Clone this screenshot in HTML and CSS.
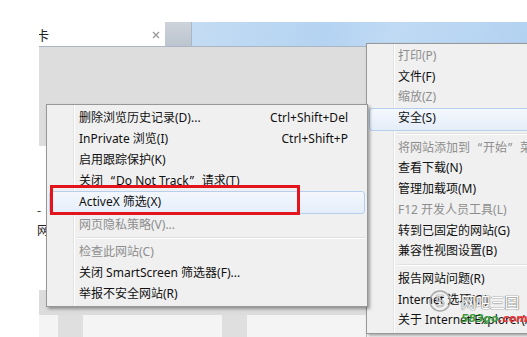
FILE: index.html
```html
<!DOCTYPE html>
<html lang="zh-CN">
<head>
<meta charset="utf-8">
<title>IE 安全菜单</title>
<link rel="stylesheet" href="styles.css">
</head>
<body>
<div class="screen">
  <div class="topgap"></div>
  <div class="tabbar">
    <div class="lead"></div>
    <div class="tab">
      <span class="tabtext">卡</span>
      <svg class="close" width="8" height="8" viewBox="0 0 8 8"><path d="M1 1L7 7M7 1L1 7" stroke="#9a9a9a" stroke-width="1.4"/></svg>
    </div>
    <div class="tabstub"></div>
    <div class="chrome"></div>
  </div>
  <div class="body">
    <div class="gutter"></div>
    <div class="content">
      <div class="band"></div>
      <div class="pagearea">
        <div class="pagetext">-<br>网页</div>
      </div>
      <div class="strip"></div>
      <div class="tiles">
        <div class="tile w19"></div>
        <div class="tgap"></div>
        <div class="tile w139"></div>
        <div class="tgap"></div>
        <div class="tile w119"></div>
        <div class="tend"></div>
      </div>
    </div>
  </div>

  <div class="menu main">
    <div class="item off"><span>打印(P)</span></div>
    <div class="item"><span>文件(F)</span></div>
    <div class="item off"><span>缩放(Z)</span></div>
    <div class="item hot"><span>安全(S)</span></div>
    <div class="sep"></div>
    <div class="item off"><span>将网站添加到<span class="q ql">“</span>开始<span class="q qr">”</span>菜单</span></div>
    <div class="item"><span>查看下载(N)</span></div>
    <div class="item"><span>管理加载项(M)</span></div>
    <div class="item off"><span>F12 开发人员工具(L)</span></div>
    <div class="item"><span>转到已固定的网站(G)</span></div>
    <div class="item"><span>兼容性视图设置(B)</span></div>
    <div class="sep"></div>
    <div class="item"><span>报告网站问题(R)</span></div>
    <div class="item"><span>Internet 选项(O)</span></div>
    <div class="item"><span>关于 Internet Explorer(A)</span></div>
  </div>

  <div class="menu sub">
    <div class="item"><span>删除浏览历史记录(D)...</span><span>Ctrl+Shift+Del</span></div>
    <div class="item"><span>InPrivate 浏览(I)</span><span>Ctrl+Shift+P</span></div>
    <div class="item"><span>启用跟踪保护(K)</span></div>
    <div class="item"><span>关闭<span class="q ql">“</span>Do Not Track<span class="q qr">”</span>请求(T)</span></div>
    <div class="item hot"><span>ActiveX 筛选(X)</span></div>
    <div class="item off"><span>网页隐私策略(V)...</span></div>
    <div class="sep"></div>
    <div class="item off"><span>检查此网站(C)</span></div>
    <div class="item"><span>关闭 SmartScreen 筛选器(F)...</span></div>
    <div class="item"><span>举报不安全网站(R)</span></div>
  </div>

  <div class="redbox"></div>

  <div class="watermark">
    <svg class="wlogo" width="22" height="26" viewBox="0 0 22 26">
      <circle cx="11" cy="13" r="10" fill="none" stroke="rgba(150,150,150,0.8)" stroke-width="1.5"/>
      <text x="11" y="19" text-anchor="middle" font-size="17" font-family="Liberation Sans, sans-serif" fill="rgba(255,255,255,0.9)" stroke="rgba(140,140,140,0.8)" stroke-width="0.7">5</text>
    </svg>
    <div class="wtext">
      <div class="wname">网吧三国</div>
      <div class="wurl"><span class="g">583go</span><span class="r">.com</span></div>
    </div>
  </div>
</div>
</body>
</html>
```

FILE: styles.css
```css
body {
  margin: 0;
  width: 527px;
  height: 337px;
  overflow: hidden;
  background: #fff;
  font-family: "Noto Sans", "Noto Sans CJK SC", sans-serif;
  font-size: 12px;
  color: #111;
}

.screen {
  position: relative;
  width: 527px;
  height: 337px;
  overflow: hidden;
  display: flex;
  flex-direction: column;
}

.topgap { height: 22px; flex: none; }

.tabbar { height: 24px; flex: none; display: flex; }
.lead { width: 39px; }
.tab {
  width: 126px;
  background: #fff;
  display: flex;
  align-items: center;
  justify-content: space-between;
  padding-right: 5px;
  box-sizing: border-box;
  overflow: hidden;
}
.tabtext {
  font-family: "Noto Sans CJK SC", sans-serif;
  font-size: 13px;
  margin-left: -3px;
  color: #222;
}
.close { display: block; margin-top: 1px; }
.tabstub {
  width: 26px;
  background: linear-gradient(#cdd3db, #bcc5cf);
  border-right: 1px solid #a8b8c8;
}
.chrome {
  flex: 1;
  background: linear-gradient(100deg, #c4dcf3 0%, #b4d3f2 40%, #c0daf4 60%, #b3d2f1 100%);
}

.body { flex: 1; display: flex; }
.gutter { width: 39px; flex: none; }
.content { flex: 1; display: flex; flex-direction: column; }
.band {
  height: 99px;
  flex: none;
  background: #dddddd;
  border-top: 1px solid #a9b5c2;
}
.pagearea { height: 144px; flex: none; background: #fff; }
.pagetext {
  padding-top: 54px;
  margin-left: -2px;
  line-height: 20px;
  font-family: "Noto Sans CJK SC", sans-serif;
  color: #222;
}
.strip { height: 25px; flex: none; background: #dcdcdc; }
.tiles { flex: 1; display: flex; }
.tile { background: #f4f4f4; }
.w19 { width: 19px; }
.w139 { width: 139px; }
.w119 { width: 119px; }
.tgap { width: 25px; background: #dfdfdf; }
.tend { flex: 1; border-left: 1px solid #b9b9b9; background: #fff; }

/* menus */
.menu {
  position: absolute;
  box-sizing: border-box;
  border: 1px solid #979797;
  padding: 2px;
  background:
    linear-gradient(to right, transparent 26px, #e2e3e3 26px, #e2e3e3 27px, #ffffff 27px, #ffffff 28px, transparent 28px),
    #f0f0f0;
  box-shadow: 2px 2px 3px rgba(0, 0, 0, 0.35);
}
.main { left: 366px; top: 43px; width: 210px; }
.sub { left: 46px; top: 104px; width: 322px; z-index: 2; }

.item {
  display: flex;
  justify-content: space-between;
  padding: 0 17px 0 30px;
  white-space: nowrap;
  color: #111;
}
.main .item { height: 20.7px; line-height: 20.7px; padding-left: 29px; }
.sub .item { height: 21px; line-height: 21px; }
.item.off { color: #8e8e8e; }
.item.hot {
  border: 1px solid #b6cfee;
  border-radius: 3px;
  background: linear-gradient(#f4f8fd, #e4edf9);
  padding-left: 29px;
}
.main .item.hot { line-height: 18.7px; padding-left: 28px; }
.sub .item.hot { line-height: 19px; }

.q { display: inline-block; width: 12px; font-family: "Noto Sans", sans-serif; }
.ql { text-align: right; padding-right: 1px; }
.qr { text-align: left; padding-left: 1px; }

.sep {
  height: 1px;
  margin: 2px 0 2px 28px;
  background: #e0e0e0;
  border-bottom: 1px solid #ffffff;
}
.main .sep { margin-bottom: 3px; }

.redbox {
  position: absolute;
  left: 50px;
  top: 185px;
  width: 250px;
  height: 30px;
  box-sizing: border-box;
  border: 3px solid #e3141c;
  z-index: 3;
}

.watermark {
  position: absolute;
  left: 429px;
  top: 288px;
  width: 100px;
  display: flex;
  align-items: flex-start;
  gap: 10px;
  z-index: 4;
  white-space: nowrap;
}
.wlogo { display: block; flex: none; }
.wtext { display: flex; flex-direction: column; margin-top: 5px; flex: none; }
.wname {
  font-family: "Noto Sans CJK SC", sans-serif;
  font-size: 15px;
  line-height: 17px;
  letter-spacing: -0.5px;
  color: #ffffff;
  text-shadow: 0 0 1px #777, 0 0 1px #777, 0 0 1px #777;
}
.wurl {
  font-family: "DejaVu Sans", sans-serif;
  font-size: 11px;
  line-height: 17px;
  font-style: italic;
  font-weight: bold;
  letter-spacing: -0.2px;
}
.wurl .g { color: #3c9a3c; }
.wurl .r { color: #e8383d; }
```
